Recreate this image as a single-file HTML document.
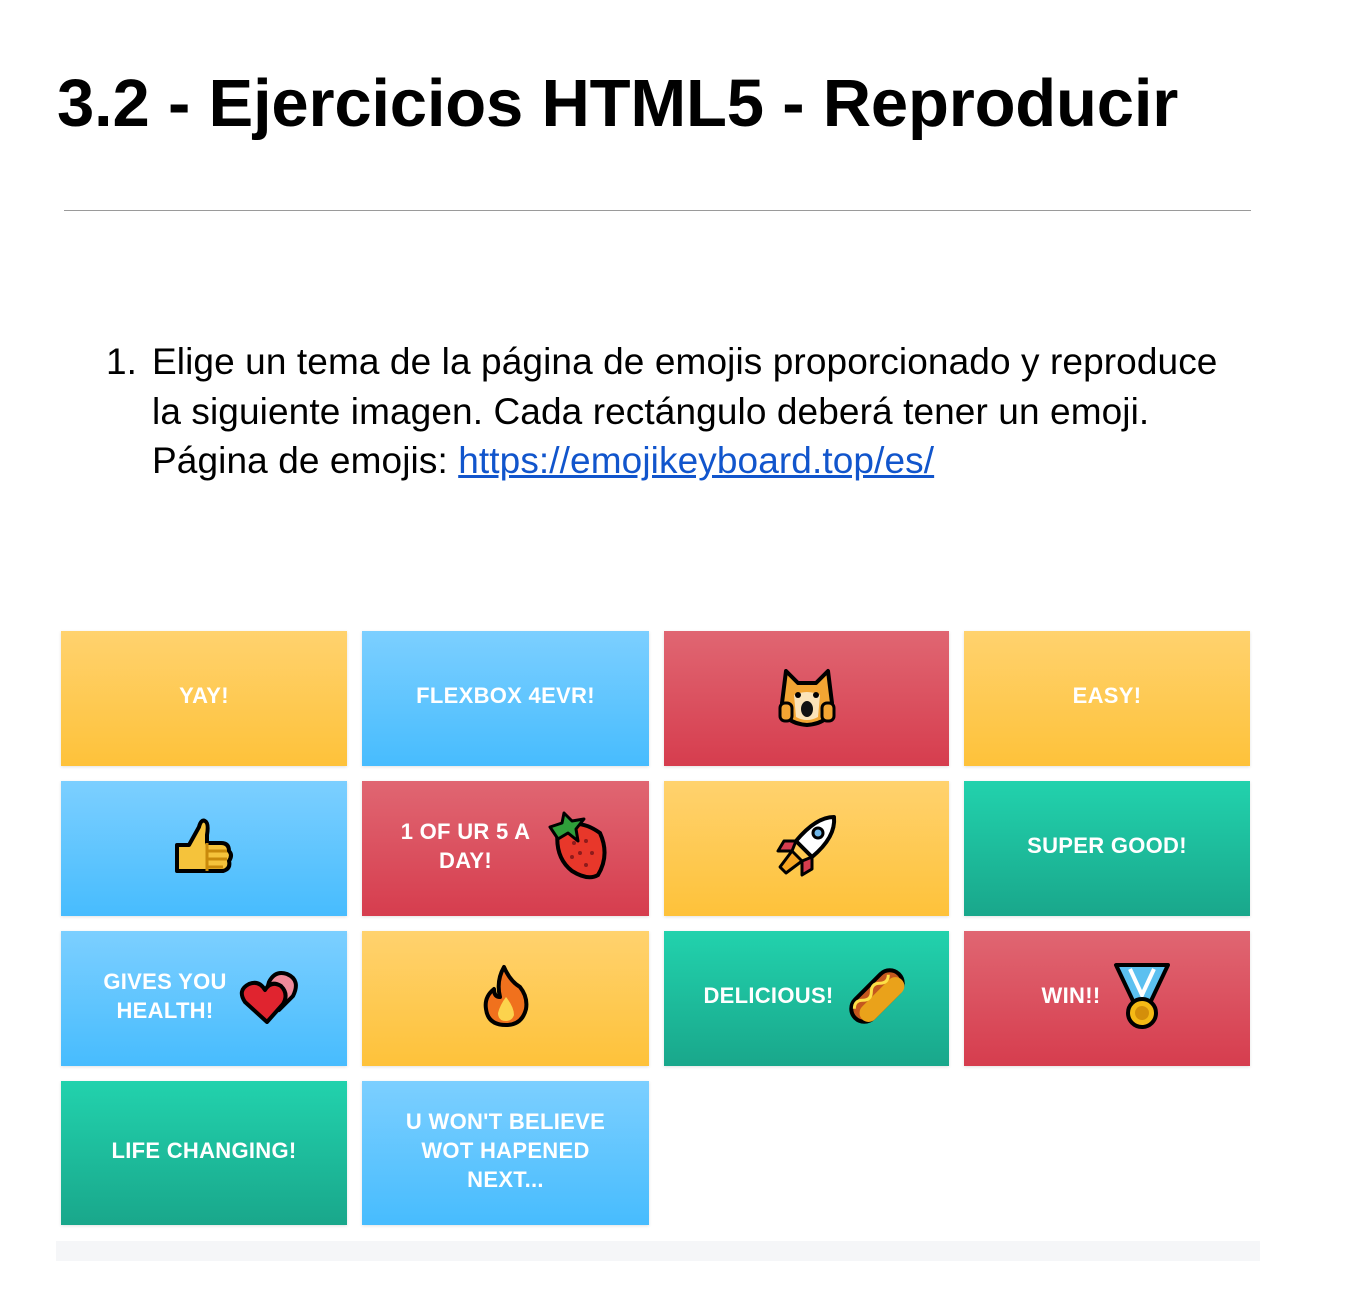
<!DOCTYPE html>
<html><head><meta charset="utf-8"><style>
body{margin:0;background:#fff;width:1348px;height:1298px;position:relative;font-family:"Liberation Sans",Arial,sans-serif;overflow:hidden}
h1{position:absolute;left:57px;top:64px;margin:0;font-size:67px;font-weight:bold;color:#000;letter-spacing:-0.2px;line-height:80px}
.hr{position:absolute;left:64px;top:210px;width:1187px;height:1px;background:#9a9a9a}
.list{position:absolute;left:106px;top:337px;font-size:37px;line-height:49.5px;color:#000;letter-spacing:0.1px}
.list .n{position:absolute;left:0;top:0}
.list .t{margin-left:46px;width:1100px}
.list a{color:#1155cc;text-decoration:underline}
.tile{position:absolute;display:flex;align-items:center;justify-content:center;color:#fff;font-weight:bold;font-size:22px;text-align:center;line-height:29px;box-shadow:0 1px 3px rgba(0,0,0,.12);letter-spacing:0.3px;padding-bottom:6px;box-sizing:border-box}
.y{background:linear-gradient(#ffd26e,#fec23a)}
.b{background:linear-gradient(#7ccfff,#47bcfe)}
.r{background:linear-gradient(#e06672,#d63d4e)}
.g{background:linear-gradient(#22d2ad,#19a78b)}
.bar{position:absolute;left:56px;top:1241px;width:1204px;height:20px;background:#f5f6f8}
svg{display:block}
</style></head><body>
<h1>3.2 - Ejercicios HTML5 - Reproducir</h1>
<div class="hr"></div>
<div class="list"><span class="n">1.</span><div class="t">Elige un tema de la página de emojis proporcionado y reproduce<br>la siguiente imagen. Cada rectángulo deberá tener un emoji.<br>Página de emojis: <a>https://emojikeyboard.top/es/</a></div></div>

<div class="tile y" style="left:61px;top:631px;width:286px;height:135px">YAY!</div>
<div class="tile b" style="left:362px;top:631px;width:287px;height:135px">FLEXBOX 4EVR!</div>
<div class="tile r" style="left:664px;top:631px;width:285px;height:135px">
<svg width="66" height="66" viewBox="0 0 66 66"><path d="M12 8 L24 20 H42 L54 8 L58 40 Q58 60 33 62 Q8 60 8 40Z" fill="#f2a533" stroke="#000" stroke-width="4" stroke-linejoin="round"/><path d="M20 32 Q33 26 46 32 L44 54 Q33 60 22 54Z" fill="#fbe3b8"/><ellipse cx="33" cy="46" rx="6" ry="8" fill="#111"/><circle cx="24" cy="32" r="3" fill="#000"/><circle cx="42" cy="32" r="3" fill="#000"/><rect x="6" y="40" width="12" height="18" rx="5" fill="#f2a533" stroke="#000" stroke-width="3"/><rect x="48" y="40" width="12" height="18" rx="5" fill="#f2a533" stroke="#000" stroke-width="3"/></svg></div>
<div class="tile y" style="left:964px;top:631px;width:286px;height:135px">EASY!</div>

<div class="tile b" style="left:61px;top:781px;width:286px;height:135px">
<svg width="62" height="62" viewBox="0 0 62 62"><path d="M4 30 H16 L26 12 Q28 4 32 6 Q36 8 34 20 L34 28 H48 Q56 28 56 36 Q60 40 56 46 Q58 54 50 56 H4Z" fill="#f5c33b" stroke="#000" stroke-width="4" stroke-linejoin="round"/><path d="M34 36 H54 M34 44 H54 M34 52 H50 M34 28 V56" stroke="#c98a0b" stroke-width="3" fill="none"/></svg></div>
<div class="tile r" style="left:362px;top:781px;width:287px;height:135px"><span style="margin-right:14px">1 OF UR 5 A<br>DAY!</span>
<svg width="66" height="70" viewBox="0 0 66 70"><path d="M14 18 Q34 6 56 22 Q66 44 54 64 Q44 70 28 60 Q10 46 14 18Z" fill="#e8372a" stroke="#000" stroke-width="4"/><path d="M6 16 L18 12 L20 2 L28 10 L40 8 L32 18 L34 30 L24 22 L14 28Z" fill="#2f9e3a" stroke="#000" stroke-width="3" stroke-linejoin="round"/><g fill="#8e1b1b"><circle cx="30" cy="32" r="2"/><circle cx="42" cy="30" r="2"/><circle cx="36" cy="42" r="2"/><circle cx="48" cy="42" r="2"/><circle cx="42" cy="54" r="2"/><circle cx="28" cy="46" r="2"/></g></svg></div>
<div class="tile y" style="left:664px;top:781px;width:285px;height:135px">
<svg width="70" height="70" viewBox="0 0 70 70"><path d="M62 6 Q44 6 24 30 L40 46 Q64 26 62 6Z" fill="#fff" stroke="#000" stroke-width="4" stroke-linejoin="round"/><circle cx="46" cy="22" r="5" fill="#6fb6e8" stroke="#000" stroke-width="3"/><path d="M24 30 L12 30 L6 40 L20 40Z M40 46 L40 58 L30 64 L30 50Z" fill="#d63d4e" stroke="#000" stroke-width="3" stroke-linejoin="round"/><path d="M20 40 L30 50 L14 62 L8 56Z" fill="#f5a623" stroke="#000" stroke-width="3" stroke-linejoin="round"/></svg></div>
<div class="tile g" style="left:964px;top:781px;width:286px;height:135px">SUPER GOOD!</div>

<div class="tile b" style="left:61px;top:931px;width:286px;height:135px"><span style="margin-right:12px">GIVES YOU<br>HEALTH!</span>
<svg width="66" height="56" viewBox="0 0 66 56"><path d="M30 14 Q36 2 48 6 Q62 12 54 28 L40 42 L26 28Z" fill="#f08a9a" stroke="#000" stroke-width="4" stroke-linejoin="round"/><path d="M28 54 L6 34 Q-2 22 10 16 Q20 12 26 22 Q32 12 42 18 Q50 26 44 36Z" fill="#e0242f" stroke="#000" stroke-width="4" stroke-linejoin="round"/></svg></div>
<div class="tile y" style="left:362px;top:931px;width:287px;height:135px">
<svg width="52" height="66" viewBox="0 0 52 66"><path d="M24 4 Q30 18 40 24 Q48 34 46 46 Q42 62 26 62 Q8 62 6 46 Q4 34 14 26 Q14 34 20 34 Q16 18 24 4Z" fill="#f0711d" stroke="#000" stroke-width="4" stroke-linejoin="round"/><path d="M26 34 Q34 44 34 52 Q32 58 26 58 Q18 58 18 50 Q20 42 26 34Z" fill="#fcd34d"/></svg></div>
<div class="tile g" style="left:664px;top:931px;width:285px;height:135px"><span style="margin-right:10px">DELICIOUS!</span>
<svg width="66" height="66" viewBox="0 0 66 66"><g transform="rotate(-45 33 33)"><rect x="2" y="20" width="62" height="26" rx="13" fill="#c4571e" stroke="#000" stroke-width="4"/><rect x="6" y="30" width="56" height="18" rx="9" fill="#eaa21a"/><path d="M8 26 Q14 20 20 26 T32 26 T44 26 T56 26" stroke="#fde047" stroke-width="3" fill="none"/></g></svg></div>
<div class="tile r" style="left:964px;top:931px;width:286px;height:135px"><span style="margin-right:12px">WIN!!</span>
<svg width="60" height="70" viewBox="0 0 60 70"><path d="M4 4 H56 L38 42 H22Z" fill="#5bc0f0" stroke="#000" stroke-width="4" stroke-linejoin="round"/><path d="M18 8 L30 34 L42 8" stroke="#fff" stroke-width="4" fill="none"/><circle cx="30" cy="52" r="14" fill="#f5b915" stroke="#000" stroke-width="4"/><circle cx="30" cy="52" r="7" fill="#d48f0a"/></svg></div>

<div class="tile g" style="left:61px;top:1081px;width:286px;height:144px">LIFE CHANGING!</div>
<div class="tile b" style="left:362px;top:1081px;width:287px;height:144px">U WON'T BELIEVE<br>WOT HAPENED<br>NEXT...</div>
<div class="bar"></div>
</body></html>
